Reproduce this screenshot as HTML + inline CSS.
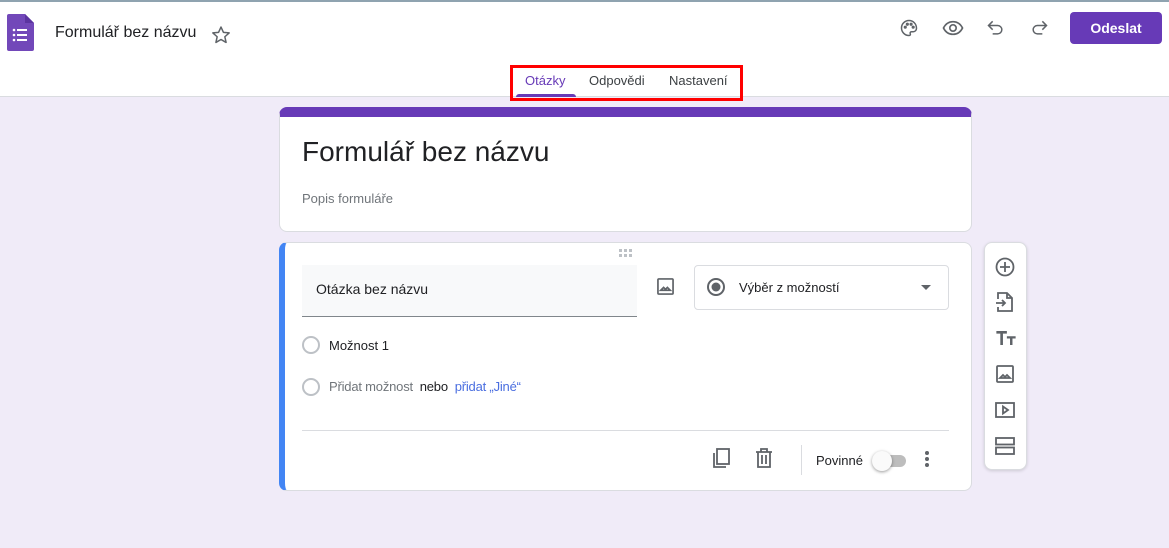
<!DOCTYPE html>
<html><head><meta charset="utf-8"><style>
*{box-sizing:border-box;margin:0;padding:0}
body{width:1169px;height:548px;overflow:hidden;background:#f0ebf8;font-family:"Liberation Sans",Arial,sans-serif;color:#202124;position:relative}
.abs{position:absolute}
#hdr{left:0;top:0;width:1169px;height:97px;background:#fff;border-top:2px solid #8fa3b0;border-bottom:1px solid #dadce0}
.card{background:#fff;border-radius:8px;border:1px solid #dadce0}
svg{display:block}
.ic path,.ic circle,.ic rect{fill:none;stroke:#5f6368;stroke-width:1.8}
</style></head><body>
<div id="hdr" class="abs">
  <svg class="abs" style="left:7px;top:12px" width="27" height="37" viewBox="0 0 27 37"><path d="M2 0h16l9 9v26a2 2 0 0 1-2 2H2a2 2 0 0 1-2-2V2a2 2 0 0 1 2-2z" fill="#7248b9"/><path d="M18 0v9h9z" fill="#5b34a0"/><g fill="#fff"><circle cx="7" cy="16" r="1.3"/><circle cx="7" cy="21" r="1.3"/><circle cx="7" cy="26" r="1.3"/><rect x="10" y="15" width="10" height="2"/><rect x="10" y="20" width="10" height="2"/><rect x="10" y="25" width="10" height="2"/></g></svg>
  <div class="abs" style="left:55px;top:22px;font-size:16px;color:#202124">Formulář bez názvu</div>
  <svg class="abs" style="left:211px;top:23px" width="20" height="20" viewBox="0 0 24 24"><path d="M12 2.5l2.9 6.3 6.9.7-5.2 4.6 1.5 6.8L12 17.4l-6.1 3.5 1.5-6.8L2.2 9.5l6.9-.7z" fill="none" stroke="#5f6368" stroke-width="1.8" stroke-linejoin="round"/></svg>
  <svg class="ic abs" style="left:899px;top:16px" width="20" height="20" viewBox="0 0 24 24"><path d="M12 3a9 9 0 0 0 0 18c1.5 0 2-1 1.5-2s0-2.5 1.5-2.5h2a4 4 0 0 0 4-4C21 7 17 3 12 3z"/><circle cx="7.5" cy="11" r="1" fill="#5f6368"/><circle cx="10" cy="7.5" r="1" fill="#5f6368"/><circle cx="14.5" cy="7.5" r="1" fill="#5f6368"/><circle cx="17" cy="11" r="1" fill="#5f6368"/></svg>
  <svg class="ic abs" style="left:942px;top:16px" width="22" height="20" viewBox="0 0 24 22"><path d="M1.5 11C4 6 8 4 12 4s8 2 10.5 7C20 16 16 18 12 18S4 16 1.5 11z"/><circle cx="12" cy="11" r="3.5"/></svg>
  <svg class="ic abs" style="left:986px;top:16px" width="20" height="20" viewBox="0 0 24 24"><path d="M4 9h10a5 5 0 0 1 0 10H8M8 4L3 9l5 5"/></svg>
  <svg class="ic abs" style="left:1029px;top:16px" width="20" height="20" viewBox="0 0 24 24"><path d="M20 9H10a5 5 0 0 0 0 10h6M16 4l5 5-5 5"/></svg>
  <div class="abs" style="left:1070px;top:10px;width:92px;height:32px;background:#673ab7;border-radius:4px;color:#fff;font-weight:bold;font-size:14px;text-align:center;line-height:32px">Odeslat</div>
  <div class="abs" style="left:525px;top:71px;font-size:13px;color:#673ab7">Otázky</div>
  <div class="abs" style="left:516px;top:92px;width:60px;height:3px;background:#673ab7;border-radius:3px 3px 0 0"></div>
  <div class="abs" style="left:589px;top:71px;font-size:13px;color:#3c4043">Odpovědi</div>
  <div class="abs" style="left:669px;top:71px;font-size:13px;color:#3c4043">Nastavení</div>
</div>
<div class="abs" style="left:510px;top:65px;width:233px;height:36px;border:3px solid #f00"></div>

<div class="abs card" style="left:279px;top:107px;width:693px;height:125px;border-top:10px solid #673ab7"></div>
<div class="abs" style="left:302px;top:136px;font-size:28px;color:#202124">Formulář bez názvu</div>
<div class="abs" style="left:302px;top:191px;font-size:13px;color:#70757a">Popis formuláře</div>

<div class="abs card" style="left:279px;top:242px;width:693px;height:249px;border-left:6px solid #4285f4"></div>
<svg class="abs" style="left:619px;top:249px" width="14" height="9"><g fill="#bdc1c6"><rect x="0" y="0" width="3" height="3"/><rect x="5" y="0" width="3" height="3"/><rect x="10" y="0" width="3" height="3"/><rect x="0" y="5" width="3" height="3"/><rect x="5" y="5" width="3" height="3"/><rect x="10" y="5" width="3" height="3"/></g></svg>
<div class="abs" style="left:302px;top:265px;width:335px;height:52px;background:#f8f9fa;border-bottom:1px solid #80868b"></div>
<div class="abs" style="left:316px;top:281px;font-size:14px">Otázka bez názvu</div>
<svg class="ic abs" style="left:657px;top:278px" width="17" height="17" viewBox="0 0 18 18"><rect x="1" y="1" width="16" height="16" rx="1"/><path d="M4 13l3-3 2 2 2-2 3 3z" fill="#5f6368" stroke="none"/></svg>
<div class="abs" style="left:694px;top:265px;width:255px;height:45px;border:1px solid #dadce0;border-radius:4px"></div>
<svg class="abs" style="left:706px;top:277px" width="20" height="20"><circle cx="10" cy="10" r="8" fill="none" stroke="#5f6368" stroke-width="2"/><circle cx="10" cy="10" r="4.5" fill="#5f6368"/></svg>
<div class="abs" style="left:739px;top:280px;font-size:13px;color:#202124">Výběr z možností</div>
<svg class="abs" style="left:921px;top:285px" width="10" height="5"><path d="M0 0h10L5 5z" fill="#5f6368"/></svg>
<div class="abs" style="left:302px;top:336px;width:18px;height:18px;border:2px solid #bdc1c6;border-radius:50%"></div>
<div class="abs" style="left:329px;top:338px;font-size:13px">Možnost 1</div>
<div class="abs" style="left:302px;top:378px;width:18px;height:18px;border:2px solid #bdc1c6;border-radius:50%"></div>
<div class="abs" style="left:329px;top:379px;font-size:13px;color:#70757a;letter-spacing:-0.2px">Přidat možnost <span style="color:#202124">&nbsp;nebo&nbsp;</span> <span style="color:#4a6ee0">přidat „Jiné“</span></div>
<div class="abs" style="left:302px;top:430px;width:647px;height:1px;background:#dadce0"></div>
<svg class="ic abs" style="left:711px;top:448px" width="20" height="20" viewBox="0 0 20 20"><path d="M3 5v14h12"/><rect x="6" y="1" width="12" height="15"/></svg>
<svg class="ic abs" style="left:755px;top:448px" width="18" height="20" viewBox="0 0 18 20"><path d="M1 4h16M6 4V1h6v3M3 4v15h12V4M7 7v9M11 7v9"/></svg>
<div class="abs" style="left:801px;top:445px;width:1px;height:30px;background:#dadce0"></div>
<div class="abs" style="left:816px;top:453px;font-size:13px">Povinné</div>
<div class="abs" style="left:876px;top:455px;width:30px;height:12px;background:#bdbdbd;border-radius:6px"></div>
<div class="abs" style="left:872px;top:451px;width:20px;height:20px;background:#fafafa;border-radius:50%;box-shadow:0 1px 3px rgba(0,0,0,.4)"></div>
<svg class="abs" style="left:925px;top:451px" width="4" height="16"><g fill="#5f6368"><circle cx="2" cy="2" r="2"/><circle cx="2" cy="8" r="2"/><circle cx="2" cy="14" r="2"/></g></svg>

<div class="abs card" style="left:984px;top:242px;width:43px;height:228px;box-shadow:0 1px 3px rgba(0,0,0,.15)"></div>
<svg class="ic abs" style="left:995px;top:257px" width="20" height="20" viewBox="0 0 20 20"><circle cx="10" cy="10" r="8.5"/><path d="M10 5v10M5 10h10"/></svg>
<svg class="ic abs" style="left:996px;top:292px" width="18" height="20" viewBox="0 0 18 20"><path d="M2 7V1h9l5 5v13H2v-4M11 1v5h5M0 11h9M6 8l3 3-3 3"/></svg>
<svg class="abs" style="left:996px;top:331px" width="20" height="14" viewBox="0 0 22 16"><path d="M0 0h12v3H7.5v13h-3V3H0zM12 6h10v2.5h-3.6V16h-2.8V8.5H12z" fill="#5f6368"/></svg>
<svg class="ic abs" style="left:996px;top:365px" width="18" height="18" viewBox="0 0 18 18"><rect x="1" y="1" width="16" height="16" rx="1"/><path d="M4 13l3-3 2 2 2-2 3 3z" fill="#5f6368" stroke="none"/></svg>
<svg class="ic abs" style="left:995px;top:402px" width="20" height="16" viewBox="0 0 20 16"><rect x="1" y="1" width="18" height="14"/><path d="M8 4.5v7l5-3.5z" fill="#5f6368" stroke="none"/></svg>
<svg class="ic abs" style="left:995px;top:437px" width="20" height="18" viewBox="0 0 20 18"><rect x="1" y="1" width="18" height="6.5"/><rect x="1" y="10.5" width="18" height="6.5"/></svg>
</body></html>
